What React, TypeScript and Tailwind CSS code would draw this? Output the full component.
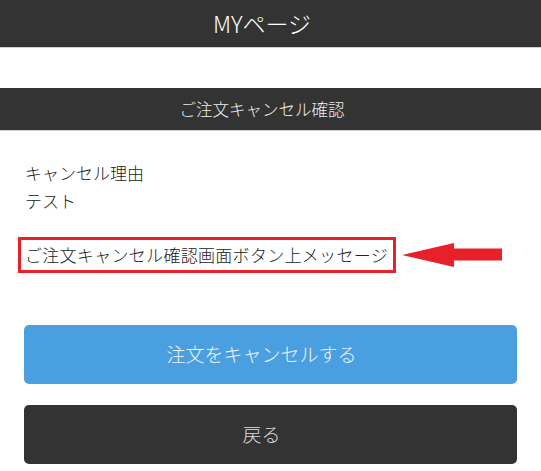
export default function App() {
  return (
    <div
      className="min-h-[471px] bg-white font-light text-[#333]"
      style={{ fontFamily: '"Noto Sans CJK JP", "Noto Sans", sans-serif' }}
    >
      {/* ヘッダー */}
      <header className="flex h-[48px] items-center justify-center border-b border-[#d0d0d0] bg-[#333] pr-[17px] text-[23px] text-white">
        MYページ
      </header>

      <div className="h-[40px]" />

      <div className="flex h-[43px] items-center justify-center border-b border-[#d0d0d0] bg-[#333] pr-[17px] text-[16.5px] text-[#eee]">
        ご注文キャンセル確認
      </div>

      <div className="px-[25px] pt-[28px] text-[17px] leading-[28px] text-[#222]">
        <p>キャンセル理由</p>
        <p>テスト</p>
      </div>

      {/* 注記メッセージ */}
      <div className="mt-[22px] flex items-center pl-[18px]">
        <div className="flex h-[36px] w-[378px] items-center border-[3px] border-[#e8202a] pl-[4px] text-[17px] tracking-[0.3px] text-[#222]">
          ご注文キャンセル確認画面ボタン上メッセージ
        </div>
        <svg className="ml-[6px]" width="101" height="24" viewBox="0 0 101 24">
          <path d="M0 12 L52 0 L52 5.5 L100 5.5 L100 17.5 L52 17.5 L52 24 Z" fill="#e8202a" />
        </svg>
      </div>

      <div className="flex flex-col gap-[21px] px-[24px] pt-[52px]">
        <button
          type="button"
          className="flex h-[59px] items-center justify-center rounded-[5px] bg-[#4a9fe1] pr-[18px] text-[19px] text-[#eef5fc]"
        >
          注文をキャンセルする
        </button>
        <button
          type="button"
          className="flex h-[59px] items-center justify-center rounded-[5px] bg-[#333] pr-[18px] text-[19px] text-[#ddd]"
        >
          戻る
        </button>
      </div>
    </div>
  )
}
